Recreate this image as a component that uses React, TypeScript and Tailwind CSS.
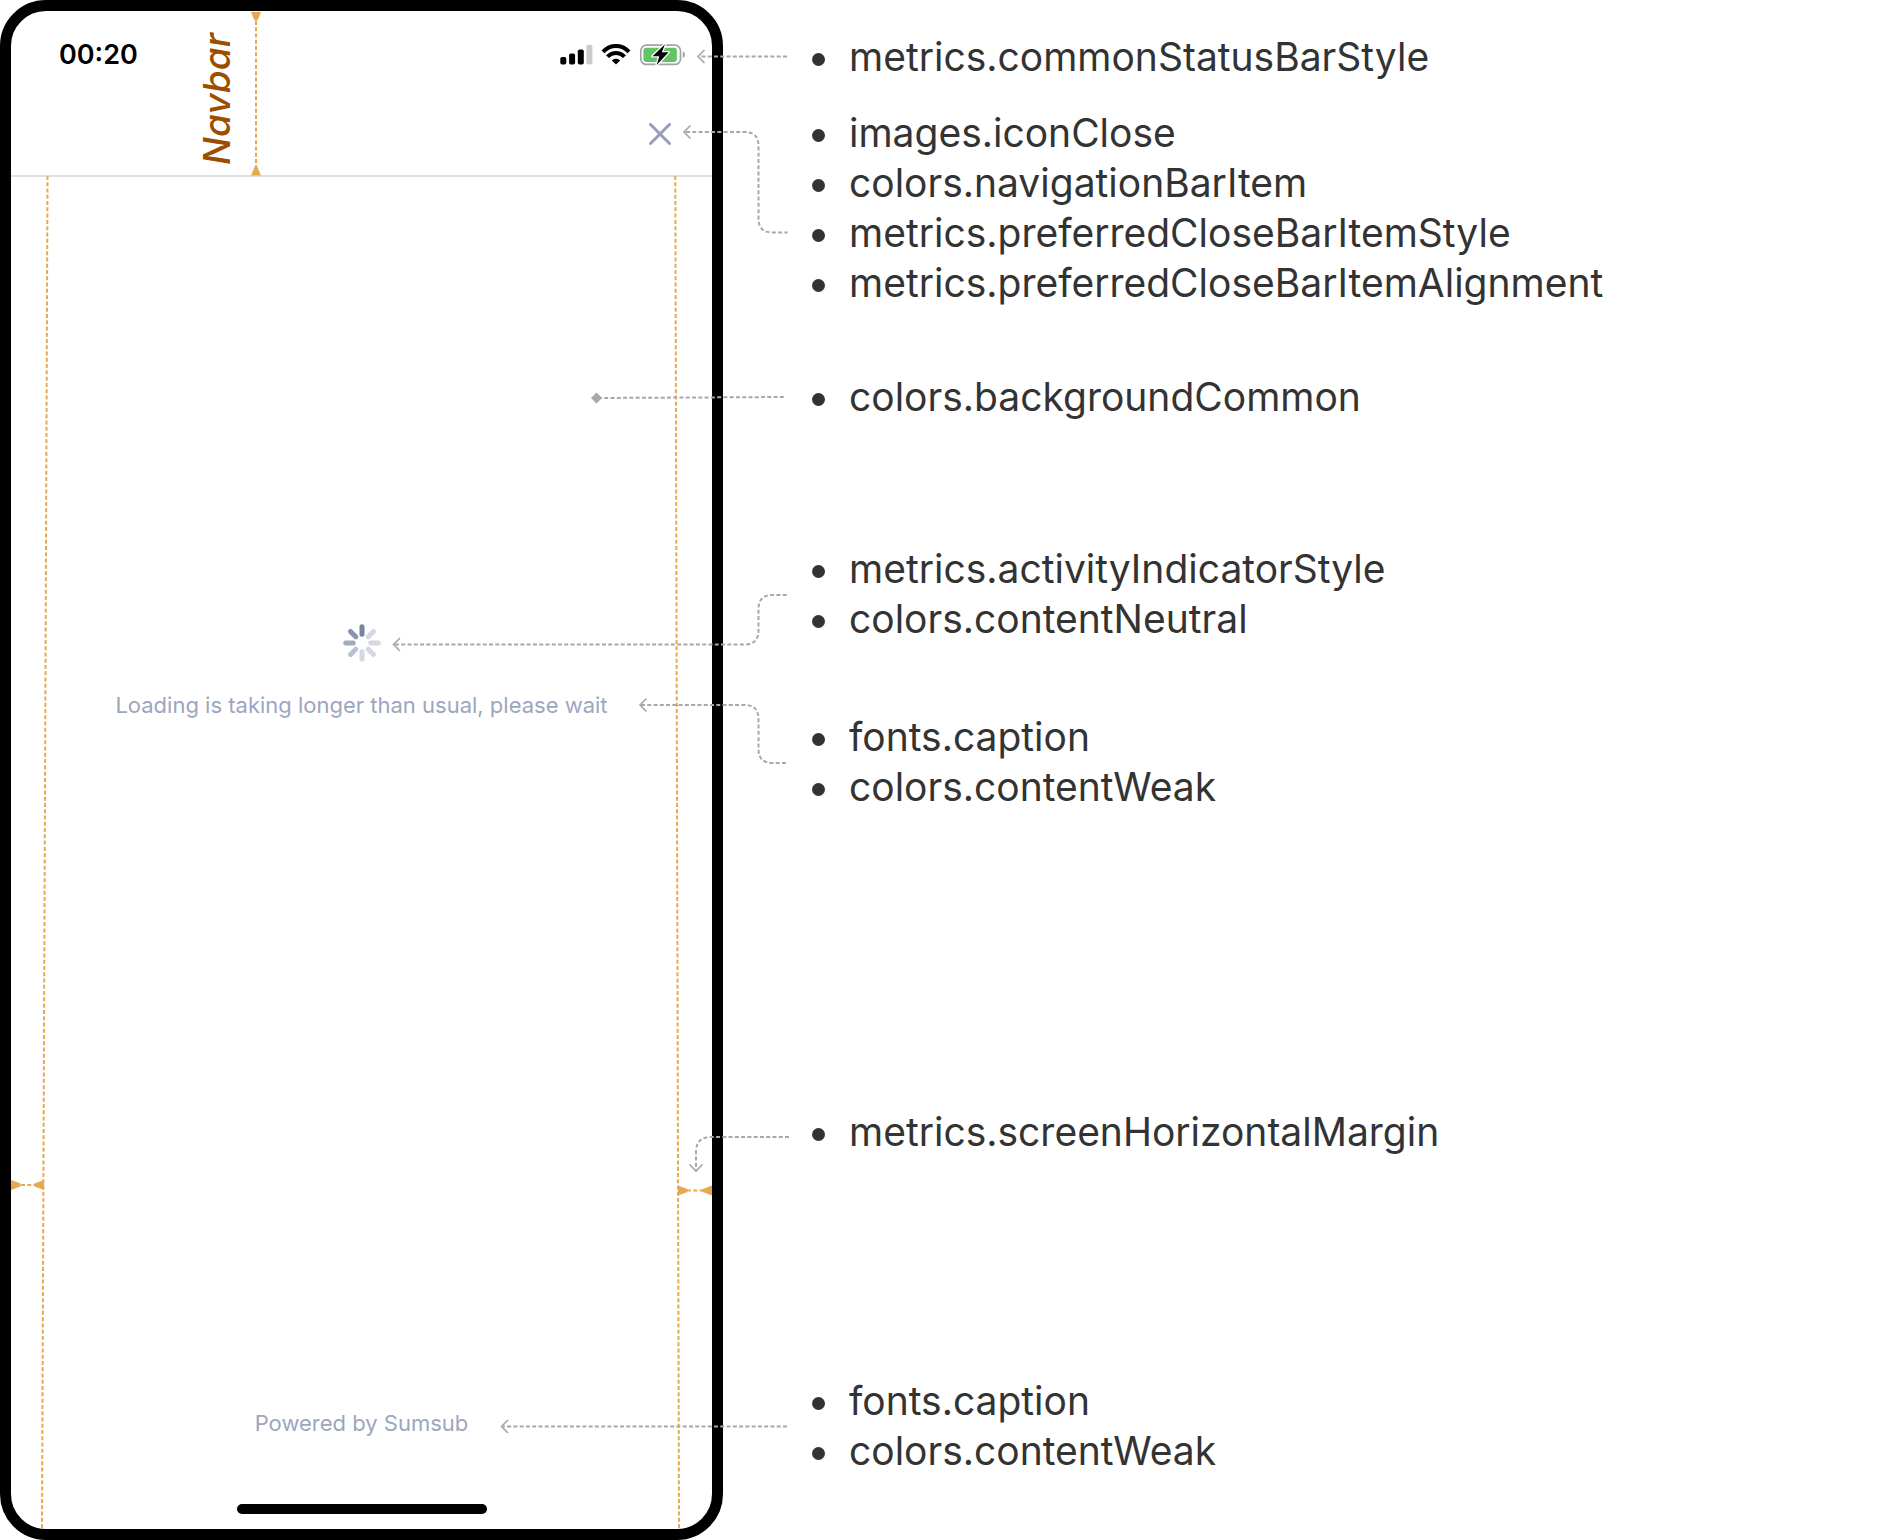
const SPOKES = [
  { angle: 0, color: "#7984a0" },
  { angle: 45, color: "#d5d8e2" },
  { angle: 90, color: "#d5d8e2" },
  { angle: 135, color: "#d5d8e2" },
  { angle: 180, color: "#d5d8e2" },
  { angle: 225, color: "#bcc1d1" },
  { angle: 270, color: "#a3abbe" },
  { angle: 315, color: "#8c95af" },
];

function Spinner() {
  return (
    <svg width="38" height="38" viewBox="-19 -19 38 38" role="img" aria-label="Loading">
      {SPOKES.map((s) => (
        <line
          key={s.angle}
          y1="-16.3"
          y2="-8.8"
          stroke={s.color}
          strokeWidth="5"
          strokeLinecap="round"
          transform={`rotate(${s.angle})`}
        />
      ))}
    </svg>
  );
}

function StatusIcons() {
  return (
    <svg width="126" height="22" viewBox="0 0 126 22" aria-hidden="true">
      <rect x="0.3" y="13" width="6" height="7.6" rx="1.8" />
      <rect x="9.1" y="9.6" width="6" height="11" rx="1.8" />
      <rect x="17.8" y="5.4" width="6" height="15.2" rx="1.8" />
      <rect x="26.4" y="0.8" width="6" height="19.8" rx="1.8" fill="#cccccc" />
      <g fill="none" stroke="#000" strokeWidth="4">
        <path d="M43 7.8 C50.5 0 61.5 0 69 7.8" />
        <path d="M47.5 12.7 C52.5 7.6 59.5 7.6 64.5 12.7" />
      </g>
      <path d="M56 20.6 L51.8 16.4 C54.2 14.2 57.8 14.2 60.2 16.4 Z" />
      <rect x="80.8" y="1.2" width="39.7" height="19.2" rx="5.5" fill="none" stroke="#a3a3a3" strokeWidth="1.7" />
      <rect x="83.4" y="3.8" width="33.5" height="14.2" rx="3" fill="#62c466" />
      <path d="M122.8 7.4 C125.8 8.2 125.8 13.2 122.8 14 Z" fill="#a3a3a3" />
      <path
        d="M105 0.3 L92.5 12.3 H99.3 L96.7 21 L108.6 8.2 H101.8 Z"
        stroke="#fff"
        strokeWidth="2.6"
        strokeLinejoin="round"
        paintOrder="stroke"
      />
    </svg>
  );
}

function Phone() {
  return (
    <section
      aria-label="Loading screen"
      className="flex w-full flex-col overflow-hidden rounded-[46px] border-[11px] border-black bg-white"
    >
      <header className="border-b-2 border-[#e0e0e0]">
        <div className="flex items-center justify-between pt-6 pr-[26px] pl-12">
          <time className="text-[27px] leading-10 font-semibold text-black">00:20</time>
          <StatusIcons />
        </div>
        <div className="flex justify-end px-[37px] pt-11 pb-[26px]">
          <button type="button" aria-label="Close" className="p-1">
            <svg width="22" height="22" viewBox="0 0 22 22" fill="none" stroke="#949eb9" strokeWidth="3" strokeLinecap="round">
              <path d="M1.5 1.5 L20.5 20.5 M20.5 1.5 L1.5 20.5" />
            </svg>
          </button>
        </div>
      </header>
      <main className="flex flex-col items-center pt-[447px] text-[22px] leading-8 text-[#9ca6c0]">
        <Spinner />
        <p className="mt-[27px]">Loading is taking longer than usual, please wait</p>
        <p className="mt-[686px]">Powered by Sumsub</p>
        <span className="mt-[65px] mb-[15px] h-[10px] w-[250px] rounded-full bg-black" />
      </main>
    </section>
  );
}

function Annotations() {
  return (
    <svg
      className="pointer-events-none absolute top-0 left-0"
      width="800"
      height="1540"
      viewBox="0 0 800 1540"
      fill="none"
      aria-hidden="true"
    >
      <g stroke="#e5a94f" strokeWidth="2" strokeDasharray="4 2.27">
        <path d="M256 21 V167" />
        <path d="M47.5 176 L42 1529" />
        <path d="M675.3 176 L679 1529" />
        <path d="M21 1185 H36" />
        <path d="M687 1190.5 H703" />
      </g>
      <g fill="#e5a94f">
        <path d="M251 12 H261 L257.5 20.5 H254.5 Z" />
        <path d="M251 175.5 H261 L257.5 167 H254.5 Z" />
        <path d="M11 1180 V1190 L20.5 1186.5 V1183.5 Z" />
        <path d="M44 1180 V1190 L34.5 1186.5 V1183.5 Z" />
        <path d="M678 1185.500 V1195.500 L687.5 1192 V1189 Z" />
        <path d="M712 1185.500 V1195.500 L702.5 1192 V1189 Z" />
      </g>
      <g stroke="#a8a8a8" strokeWidth="2" strokeDasharray="4 2.27">
        <path d="M787 56.5 H699" />
        <path d="M686 132 H744.5 Q758.5 132 758.5 146 V218.5 Q758.5 232.5 772.5 232.5 H787.5" />
        <path d="M598 398 L785 397" />
        <path d="M395 644.5 H744.5 Q758.5 644.5 758.5 630.5 V609 Q758.5 595 772.5 595 H787" />
        <path d="M641 705 H744.5 Q758.5 705 758.5 719 V749 Q758.5 763 772.5 763 H787.5" />
        <path d="M789 1137 H711 Q696 1137 696 1152 V1170" />
        <path d="M787 1426.5 H503" />
      </g>
      <g stroke="#a8a8a8" strokeWidth="1.7">
        <path d="M704.5 50 L698 56.5 L704.5 63" />
        <path d="M690.5 125.5 L684 132 L690.5 138.5" />
        <path d="M400 638 L393.5 644.5 L400 651" />
        <path d="M646.5 698.5 L640 705 L646.5 711.5" />
        <path d="M689.5 1164.5 L696 1171 L702.5 1164.5" />
        <path d="M508 1420 L501.5 1426.5 L508 1433" />
      </g>
      <path d="M596.5 392.5 L602 398 L596.5 403.5 L591 398 Z" fill="#a8a8a8" />
    </svg>
  );
}

function Notes({ className, items }: { className?: string; items: string[] }) {
  return (
    <ul className={className}>
      {items.map((item) => (
        <li key={item} className="flex items-center gap-6">
          <span aria-hidden="true" className="mt-[5px] size-[13px] shrink-0 rounded-full bg-[#333333]" />
          <span>{item}</span>
        </li>
      ))}
    </ul>
  );
}

export default function App() {
  return (
    <div className="flex min-h-screen items-start bg-white font-['Inter',sans-serif]">
      <div className="relative w-[723px] shrink-0">
        <Phone />
        <span className="absolute top-[33px] left-48 rotate-180 text-[37px] leading-[50px] font-medium text-[#9c4d00] italic [writing-mode:vertical-rl]">
          Navbar
        </span>
        <Annotations />
      </div>
      <div className="flex flex-1 flex-col pt-8 pl-[89px] text-[39px] leading-[50px] text-[#333333]">
        <Notes items={["metrics.commonStatusBarStyle"]} />
        <Notes
          className="mt-[26px]"
          items={[
            "images.iconClose",
            "colors.navigationBarItem",
            "metrics.preferredCloseBarItemStyle",
            "metrics.preferredCloseBarItemAlignment",
          ]}
        />
        <Notes className="mt-16" items={["colors.backgroundCommon"]} />
        <Notes className="mt-[122px]" items={["metrics.activityIndicatorStyle", "colors.contentNeutral"]} />
        <Notes className="mt-[68px]" items={["fonts.caption", "colors.contentWeak"]} />
        <Notes className="mt-[295px]" items={["metrics.screenHorizontalMargin"]} />
        <Notes className="mt-[219px]" items={["fonts.caption", "colors.contentWeak"]} />
      </div>
    </div>
  );
}
